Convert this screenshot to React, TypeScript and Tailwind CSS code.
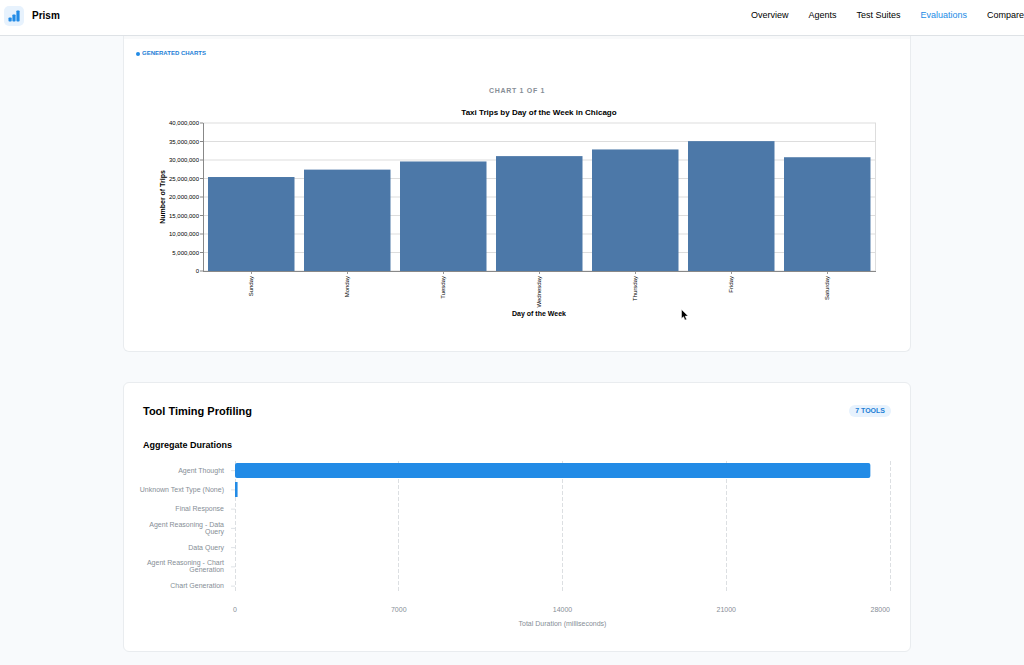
import clsx from "clsx";

const NAV_ITEMS = ["Overview", "Agents", "Test Suites", "Evaluations", "Compare"];

const TRIPS = [
  { day: "Sunday", value: 25400000 },
  { day: "Monday", value: 27400000 },
  { day: "Tuesday", value: 29600000 },
  { day: "Wednesday", value: 31050000 },
  { day: "Thursday", value: 32850000 },
  { day: "Friday", value: 35100000 },
  { day: "Saturday", value: 30750000 },
];

// Long tool names are already split into the lines they wrap to
const TOOLS = [
  { label: ["Agent Thought"], ms: 27160 },
  { label: ["Unknown Text Type (None)"], ms: 110 },
  { label: ["Final Response"], ms: 0 },
  { label: ["Agent Reasoning - Data", "Query"], ms: 0 },
  { label: ["Data Query"], ms: 0 },
  { label: ["Agent Reasoning - Chart", "Generation"], ms: 0 },
  { label: ["Chart Generation"], ms: 0 },
];

function Logo() {
  return (
    <svg viewBox="0 0 20 20" className="h-5 w-5" aria-hidden>
      <rect width="20" height="20" rx="5" fill="#e7f2fd" />
      <rect x="4.5" y="11.5" width="3.2" height="4" rx="0.8" fill="#228be6" />
      <rect x="8.4" y="8.5" width="3.2" height="7" rx="0.8" fill="#228be6" />
      <rect x="12.4" y="4.5" width="3.2" height="11" rx="0.8" fill="#228be6" />
    </svg>
  );
}

function Header() {
  return (
    <header className="flex h-9 items-center border-b border-[#dee2e6] bg-white pb-1 pl-1">
      <a href="#" className="flex items-center gap-2 text-[10px] font-bold text-black">
        <Logo />
        Prism
      </a>
      <nav className="ml-auto flex gap-5 text-[9px] whitespace-nowrap">
        {NAV_ITEMS.map((item) => (
          <a
            key={item}
            href="#"
            className={clsx(item === "Evaluations" ? "text-[#228be6]" : "text-black")}
          >
            {item}
          </a>
        ))}
      </nav>
    </header>
  );
}

function TripsChart() {
  const left = 45;
  const right = 718;
  const top = 19;
  const bottom = 167;
  const max = 40000000;
  const y = (v: number) => bottom - (v / max) * (bottom - top);
  const ticks = [0, 1, 2, 3, 4, 5, 6, 7, 8].map((n) => n * 5000000);

  return (
    <svg viewBox="0 0 718 216" className="mt-2 block w-full" role="img" aria-label="Taxi trips by day">
      <text x="381" y="11" textAnchor="middle" className="text-[8px] font-bold">
        Taxi Trips by Day of the Week in Chicago
      </text>

      {ticks.map((t) => (
        <g key={t}>
          <line x1={left} x2={right} y1={y(t)} y2={y(t)} stroke="#dddddd" />
          <line x1={left - 3} x2={left} y1={y(t)} y2={y(t)} stroke="#888888" />
          <text x="41" y={y(t) + 2} textAnchor="end" className="text-[6px]">
            {t.toLocaleString("en-US")}
          </text>
        </g>
      ))}
      <line x1="717.5" x2="717.5" y1={top} y2={bottom} stroke="#dddddd" />

      {TRIPS.map((d, i) => (
        <g key={d.day}>
          <rect
            x={50 + i * 96}
            y={y(d.value)}
            width="86.5"
            height={bottom - y(d.value)}
            fill="#4c78a8"
          />
          <line x1={93.5 + i * 96} x2={93.5 + i * 96} y1={bottom} y2={bottom + 3} stroke="#999999" />
          <text
            transform={`translate(${95 + i * 96} ${bottom + 5}) rotate(-90)`}
            textAnchor="end"
            className="text-[6px]"
          >
            {d.day}
          </text>
        </g>
      ))}

      <line x1="45.5" x2="45.5" y1={top} y2={bottom} stroke="#888888" />
      <line x1={left} x2={right} y1={bottom + 0.5} y2={bottom + 0.5} stroke="#888888" />
      <text transform="translate(7 93) rotate(-90)" textAnchor="middle" className="text-[7px] font-bold">
        Number of Trips
      </text>
      <text x="381" y="212" textAnchor="middle" className="text-[7px] font-bold">
        Day of the Week
      </text>
    </svg>
  );
}

function DurationsChart() {
  const left = 101;
  const right = 756;
  const top = 6;
  const step = 19.25;
  const x = (ms: number) => left + (ms / 28000) * (right - left);

  return (
    <svg
      viewBox="0 0 766 176"
      className="mt-1 block w-full fill-[#868e96] text-[7px]"
      role="img"
      aria-label="Aggregate durations"
    >
      {[0, 7000, 14000, 21000, 28000].map((t) => (
        <g key={t}>
          <line
            x1={Math.floor(x(t)) + 0.5}
            x2={Math.floor(x(t)) + 0.5}
            y1={top}
            y2={top + 132}
            stroke="#dcdfe2"
            strokeDasharray="4 2"
          />
          <text x={x(t)} y="157" textAnchor={t === 28000 ? "end" : "middle"}>
            {t}
          </text>
        </g>
      ))}

      {TOOLS.map((tool, i) => {
        const mid = top + step * (i + 0.5);
        return (
          <g key={tool.label.join(" ")}>
            <line x1={left - 4} x2={left} y1={mid} y2={mid} stroke="#dee2e6" />
            {tool.label.map((line, n) => (
              <text
                key={line}
                x="90"
                y={mid + 2 + (n - (tool.label.length - 1) / 2) * 7}
                textAnchor="end"
              >
                {line}
              </text>
            ))}
            {tool.ms > 0 && (
              <rect
                x={left}
                y={Math.round(mid) - 8}
                width={x(tool.ms) - left}
                height="15"
                rx={tool.ms > 1000 ? 2 : 0}
                fill="#228be6"
              />
            )}
          </g>
        );
      })}

      <text x="428.5" y="171" textAnchor="middle">
        Total Duration (milliseconds)
      </text>
    </svg>
  );
}

function Pointer() {
  return (
    <svg
      viewBox="0 0 8 12"
      className="pointer-events-none absolute top-[273px] left-[557px] h-3 w-2"
      aria-hidden
    >
      <path
        d="M.5.5v9l2-1.8 1.4 3.4 1.7-.7-1.4-3.3h2.9z"
        fill="#000"
        stroke="#fff"
        strokeWidth="0.5"
      />
    </svg>
  );
}

export default function App() {
  return (
    <div className="min-h-screen bg-[#f8fafc] font-['Liberation_Sans',Arial,sans-serif] text-black">
      <Header />

      <main className="flex flex-col gap-[30px] pr-[113px] pb-3 pl-[123px]">
        <section className="relative rounded-b-md border-x border-b border-[#e9ecef] bg-white pb-[31px]">
          <div className="h-[3px] bg-[#f8f9fa]" />
          <h2 className="mt-[10px] flex items-center gap-[2px] pl-3 text-[6px] leading-[9px] font-bold text-[#1c7ed6]">
            <span className="h-1 w-1 rounded-full bg-[#228be6]" />
            GENERATED CHARTS
          </h2>
          <div className="px-[34px]">
            <p className="mt-7 text-center text-[7px] leading-[10px] font-bold tracking-widest text-[#868e96]">
              CHART 1 OF 1
            </p>
            <TripsChart />
          </div>
          <Pointer />
        </section>

        <section className="rounded-md border border-[#e9ecef] bg-white px-[10px] py-5">
          <div className="flex items-center justify-between px-[9px]">
            <h2 className="text-[11px] leading-4 font-bold">Tool Timing Profiling</h2>
            <span className="rounded-full bg-[#e7f2fd] px-[6px] text-[7px] leading-3 font-bold text-[#1c7ed6]">
              7 TOOLS
            </span>
          </div>
          <h3 className="mt-5 px-[9px] text-[9px] leading-3 font-bold">Aggregate Durations</h3>
          <DurationsChart />
        </section>
      </main>
    </div>
  );
}
